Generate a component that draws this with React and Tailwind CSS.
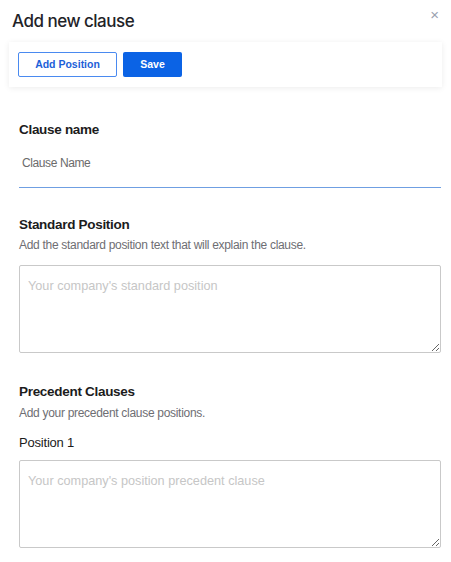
import React from 'react';

export default function App() {
  return (
    <div className="w-[451px] h-[562px] bg-white overflow-hidden relative" style={{ fontFamily: '"Liberation Sans", Arial, sans-serif' }}>
      <button className="absolute right-[12px] top-[7px] text-gray-400 text-[15px] leading-none font-light">×</button>
      <h1 className="pl-[12px] pt-[9px] text-[17px] tracking-[-0.5px] font-medium text-[#1f2328] leading-[24px]" style={{ fontFamily: 'Inter, sans-serif' }}>
        Add new clause
      </h1>

      <div className="mx-[9px] mt-[9px] h-[45px] px-[9px] flex items-center gap-[6px] bg-white shadow-[0_1px_6px_rgba(0,0,0,0.08)]">
        <button className="w-[99px] h-[25px] border border-[#4a8af0] rounded-[2px] text-[#1d5fd8] text-[10.5px] font-bold">
          Add Position
        </button>
        <button className="w-[59px] h-[25px] bg-[#0b63e5] rounded-[2px] text-white text-[10.5px] font-bold">
          Save
        </button>
      </div>

      <div className="px-[19px] pr-[10px]">
        <h2 className="mt-[34px] text-[13.5px] tracking-[-0.3px] font-bold text-[#1c1c1c] leading-[18px]">Clause name</h2>
        <div className="mt-[12px] pb-[12px] border-b border-[#6f9fe2]">
          <input
            placeholder="Clause Name"
            className="block w-full h-[24px] px-[3px] text-[12px] tracking-[-0.4px] outline-none placeholder:text-[#6b6b6b]"
          />
        </div>

        <h2 className="mt-[28px] text-[13.5px] tracking-[-0.3px] font-bold text-[#1c1c1c] leading-[18px]">Standard Position</h2>
        <p className="mt-[3px] text-[12px] tracking-[-0.3px] text-[#6e6e73] leading-[16px]">Add the standard position text that will explain the clause.</p>
        <textarea
          placeholder="Your company's standard position"
          className="block mt-[12px] w-full h-[88px] border border-[#c9c9c9] rounded-[2px] px-[8px] py-[11px] text-[12.7px] outline-none placeholder:text-[#c6c6c6]"
        />

        <h2 className="mt-[30px] text-[13.5px] tracking-[-0.3px] font-bold text-[#1c1c1c] leading-[18px]">Precedent Clauses</h2>
        <p className="mt-[4px] text-[12px] tracking-[-0.3px] text-[#6e6e73] leading-[16px]">Add your precedent clause positions.</p>
        <p className="mt-[13px] text-[13px] tracking-[-0.2px] text-[#1c1c1c] leading-[18px]">Position 1</p>
        <textarea
          placeholder="Your company's position precedent clause"
          className="block mt-[8px] w-full h-[88px] border border-[#c9c9c9] rounded-[2px] px-[8px] py-[11px] text-[12.7px] outline-none placeholder:text-[#c6c6c6]"
        />
      </div>
    </div>
  );
}
